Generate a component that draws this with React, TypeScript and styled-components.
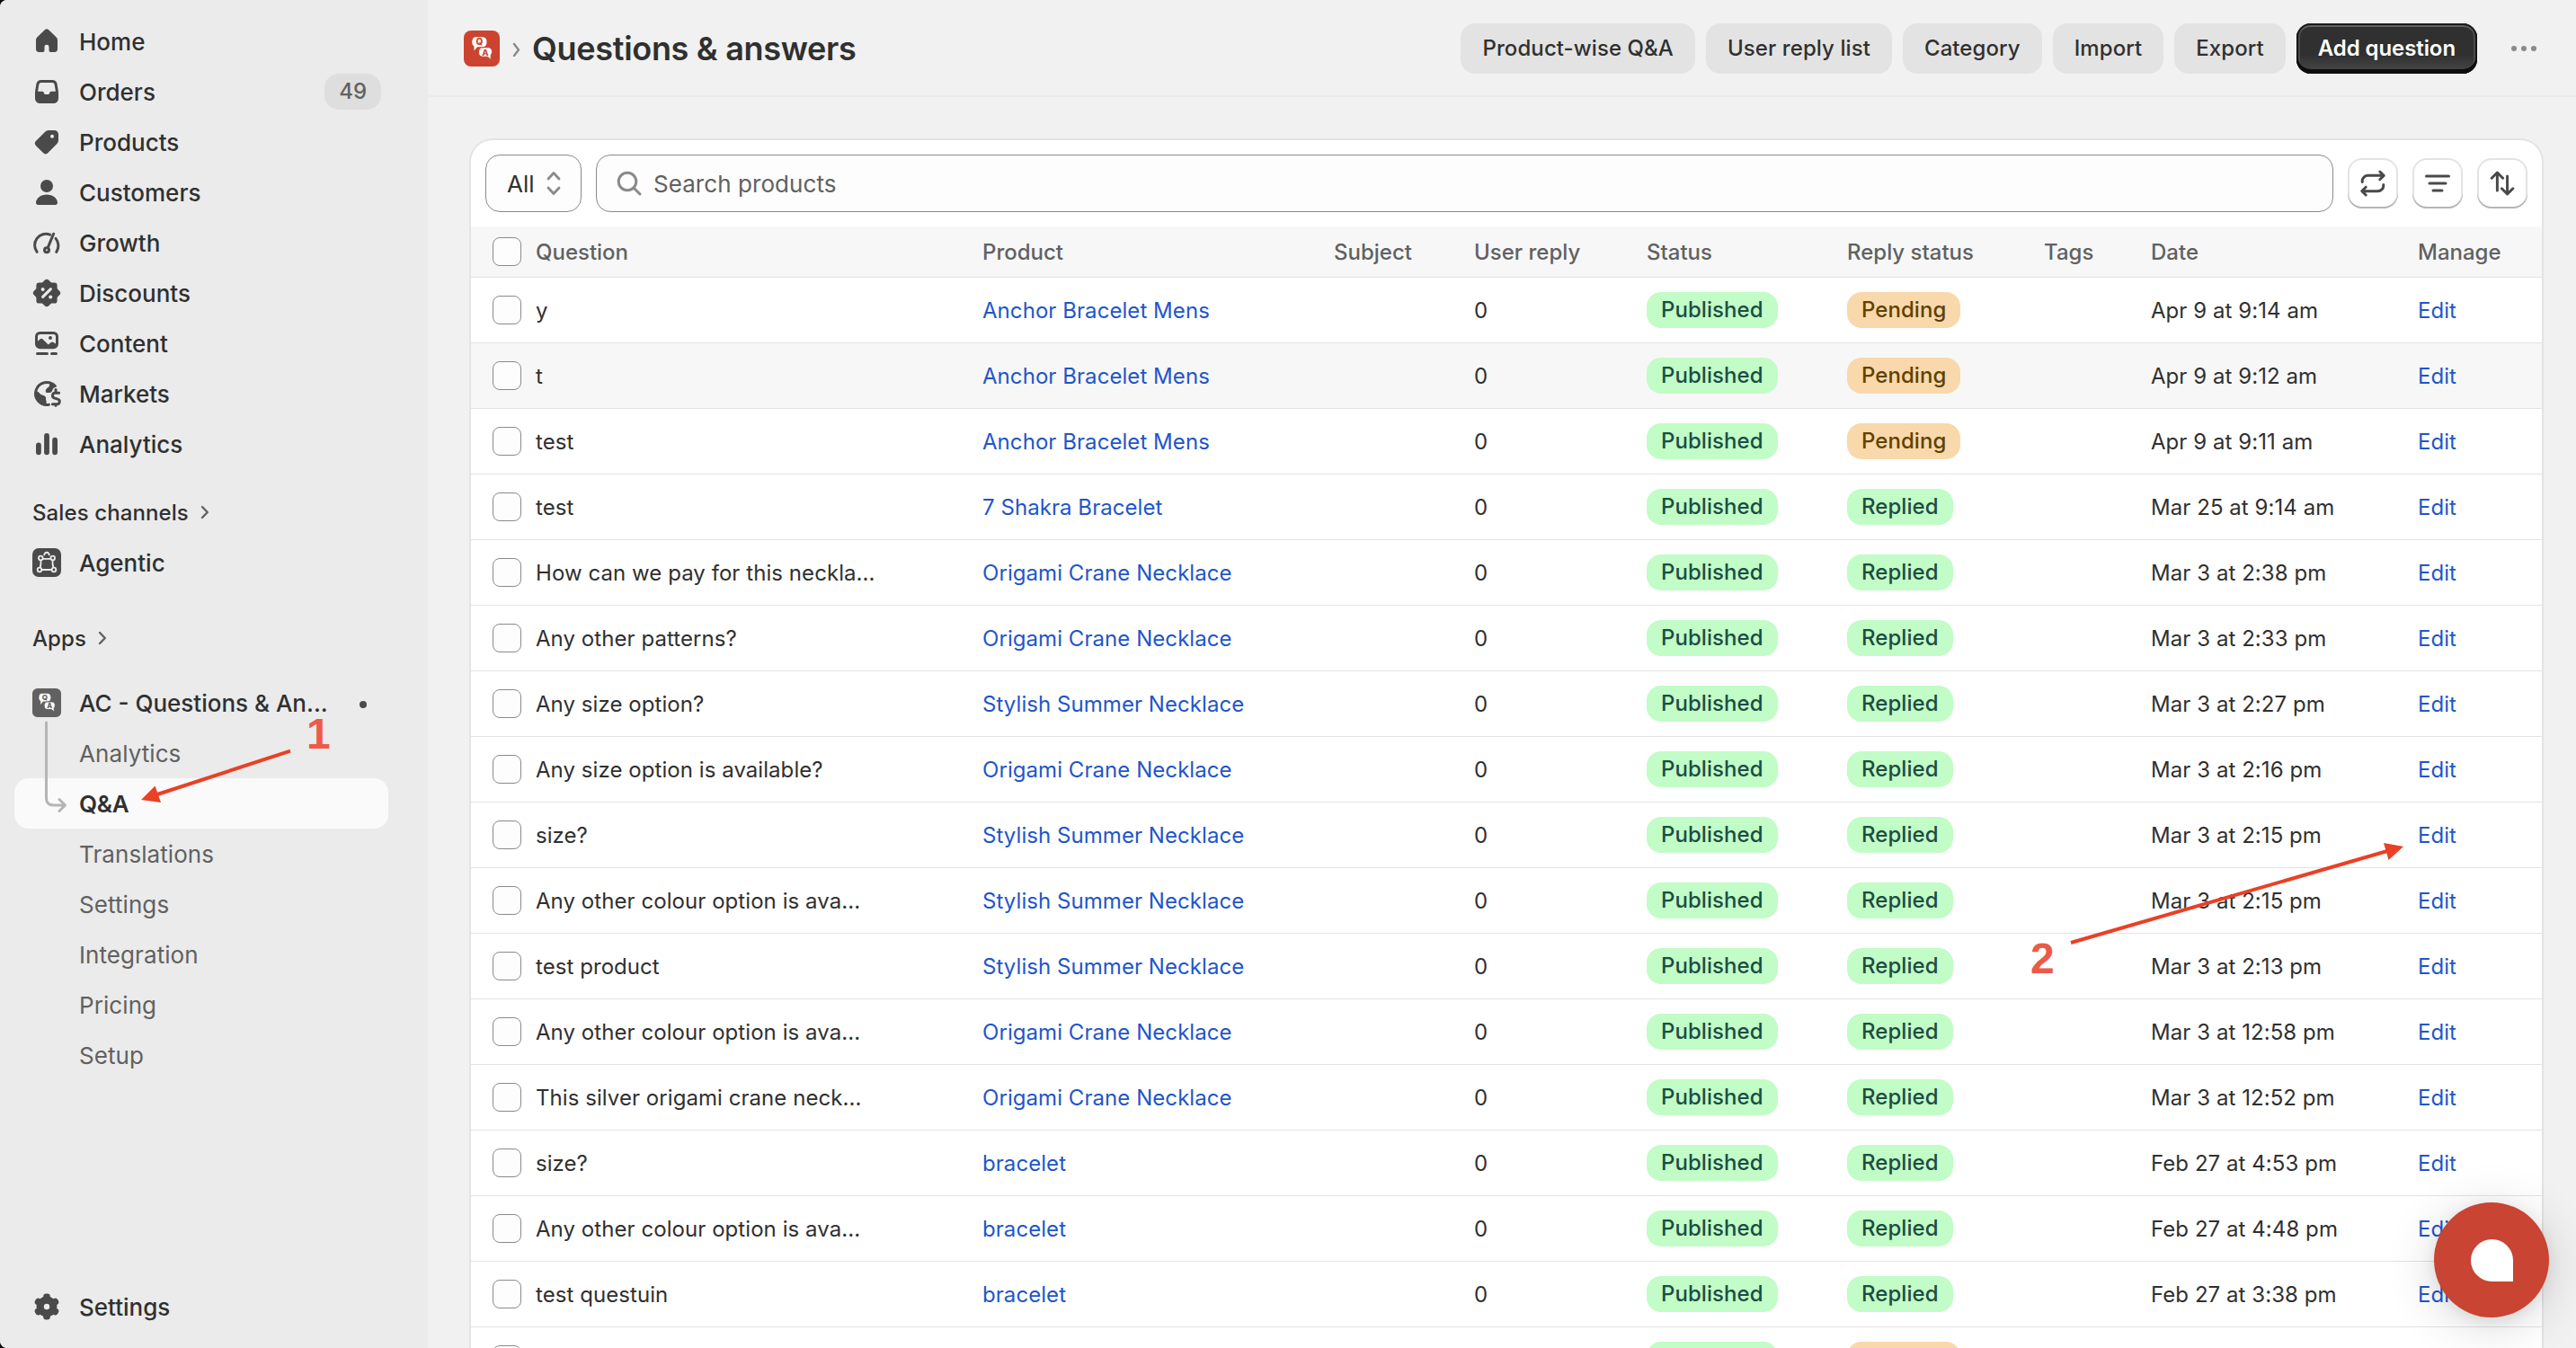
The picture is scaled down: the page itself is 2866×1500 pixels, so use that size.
import React from "react";
import styled, { createGlobalStyle, css } from "styled-components";

const GlobalStyle = createGlobalStyle`
  *, *::before, *::after { box-sizing: border-box; }
  html, body { margin: 0; padding: 0; background: #0c0c0c; overflow: hidden; }
  body {
    font-family: Inter, "Liberation Sans", sans-serif;
    color: #303030;
    -webkit-font-smoothing: antialiased;
  }
`;

const Shell = styled.div`
  position: relative;
  display: flex;
  width: 2866px;
  height: 1500px;
  overflow: hidden;
  background: #f1f1f1;
  border-radius: 8px 0 0 8px;
`;

/* ---------- sidebar ---------- */

const Sidebar = styled.nav`
  display: flex;
  flex-direction: column;
  flex: none;
  width: 476px;
  padding: 18px 44px 18px 16px;
  background: #ebebeb;
`;

const NavRow = styled.div<{ $kind?: "main" | "sub" | "active" }>`
  display: flex;
  align-items: center;
  height: 56px;
  padding: 0 8px 0 16px;
  border-radius: 16px;
  font-size: 26px;
  font-weight: 500;
  color: #303030;
  ${(p) =>
    p.$kind === "sub" &&
    css`
      font-weight: 400;
      letter-spacing: 0.08px;
      color: #616161;
    `}
  ${(p) =>
    p.$kind === "active" &&
    css`
      font-weight: 600;
      letter-spacing: -0.3px;
      background: #fafafa;
    `}
`;

const NavIcon = styled.span`
  display: flex;
  align-items: center;
  justify-content: center;
  flex: none;
  width: 40px;
  height: 40px;
  margin-right: 16px;
  color: #4a4a4a;
  svg { display: block; }
`;

const NavLabel = styled.span`
  flex: 1;
  white-space: nowrap;
`;

const CountBadge = styled.span`
  padding: 0 16px;
  border-radius: 16px;
  background: #dedede;
  font-size: 24px;
  font-weight: 500;
  line-height: 40px;
  color: #616161;
`;

const Section = styled.div<{ $top: number; $bottom: number }>`
  display: flex;
  align-items: center;
  gap: 13px;
  height: 40px;
  margin-top: ${(p) => p.$top}px;
  margin-bottom: ${(p) => p.$bottom}px;
  padding-left: 20px;
  font-size: 24px;
  font-weight: 500;
  letter-spacing: 0.1px;
  color: #303030;
`;

const AppGroup = styled.div`
  position: relative;
`;

const Connector = styled.svg`
  position: absolute;
  left: 32px;
  top: 46px;
`;

const Dot = styled.span`
  width: 8px;
  height: 8px;
  margin: 4px 16px 0 0;
  border-radius: 50%;
  background: #4a4a4a;
`;

const Spacer = styled.div`
  flex: 1;
`;

/* ---------- main ---------- */

const Main = styled.main`
  display: flex;
  flex-direction: column;
  flex: 1;
  min-width: 0;
`;

const TopBar = styled.header`
  display: flex;
  align-items: center;
  flex: none;
  height: 108px;
  padding: 2px 38px 0 40px;
  border-bottom: 2px solid #ebebeb;
`;

const Title = styled.h1`
  flex: 1;
  margin: 0 0 0 12px;
  font-size: 36px;
  line-height: 48px;
  font-weight: 600;
  letter-spacing: -0.3px;
  white-space: nowrap;
`;

const Crumb = styled.svg`
  margin-left: 14px;
`;

const Actions = styled.div`
  display: flex;
  align-items: center;
  gap: 12px;
`;

const Button = styled.button<{ $primary?: boolean }>`
  height: 56px;
  padding: 0 24px;
  border: 0;
  border-radius: 16px;
  background: #e3e3e3;
  font: 500 24px/56px Inter, "Liberation Sans", sans-serif;
  letter-spacing: 0.08px;
  color: #303030;
  white-space: nowrap;
  ${(p) =>
    p.$primary &&
    css`
      color: #fff;
      font-weight: 600;
      letter-spacing: -0.08px;
      background: linear-gradient(180deg, #303030 63%, #4a4a4a 100%);
      box-shadow: inset 0 -4px 0 1px #0d0d0d, inset 0 0 0 2px #1a1a1a,
        inset 0 4px 0 #616161, inset 2px 0 0 2px #4a4a4a, inset -2px 0 0 2px #4a4a4a;
    `}
`;

const More = styled.svg`
  margin-left: 32px;
`;

const Card = styled.section`
  flex: none;
  width: 2304px;
  height: 1500px;
  margin: 48px 0 0 48px;
  border-radius: 24px;
  background: #fff;
  box-shadow: 0 0 0 2px #e3e3e3;
  overflow: hidden;
`;

const Filters = styled.div`
  display: flex;
  align-items: center;
  gap: 16px;
  height: 96px;
  padding: 0 16px;
`;

const Field = styled.div<{ $grow?: boolean }>`
  display: flex;
  align-items: center;
  height: 64px;
  border: 1.4px solid #8a8a8a;
  border-radius: 16px;
  background: #fdfdfd;
  font-size: 26px;
  font-weight: 400;
  letter-spacing: 0.06px;
  ${(p) =>
    p.$grow
      ? css`
          flex: 1;
          gap: 13px;
          padding-left: 22px;
          color: #616161;
        `
      : css`
          width: 107px;
          gap: 12px;
          padding-left: 23px;
        `}
`;

const IconButton = styled.button`
  display: flex;
  align-items: center;
  justify-content: center;
  width: 56px;
  height: 56px;
  padding: 0;
  border: 0;
  border-radius: 16px;
  background: #fff;
  color: #4a4a4a;
  box-shadow: inset 0 -2px 0 #b5b5b5, inset 0 0 0 2px #e3e3e3;
`;

const columns = "48px 497px 391px 156px 192px 223px 219px 119px 297px 1fr";

const HeadRow = styled.div`
  display: grid;
  grid-template-columns: ${columns};
  align-items: center;
  height: 56px;
  padding-left: 24px;
  background: #f7f7f7;
  font-size: 24px;
  font-weight: 500;
  color: #616161;
`;

const Row = styled.div<{ $hover?: boolean }>`
  display: grid;
  grid-template-columns: ${columns};
  align-items: center;
  height: 73px;
  padding-left: 24px;
  border-top: 1px solid #e3e3e3;
  background: ${(p) => (p.$hover ? "#f7f7f7" : "#fff")};
  font-size: 24px;
  font-weight: 400;
  letter-spacing: 0.06px;
  white-space: nowrap;
`;

const Checkbox = styled.span`
  width: 32px;
  height: 32px;
  border: 1.4px solid #8a8a8a;
  border-radius: 8px;
  background: #fdfdfd;
`;

const Link = styled.a`
  color: #1f56c9;
  text-decoration: none;
`;

const Badge = styled.span<{ $tone: "success" | "warning" }>`
  justify-self: start;
  padding: 0 16px;
  border-radius: 16px;
  line-height: 40px;
  font-weight: 500;
  background: ${(p) => (p.$tone === "success" ? "#c2fcc6" : "#f9d8ab")};
  color: ${(p) => (p.$tone === "success" ? "#1c4d42" : "#5e4200")};
`;

/* ---------- overlays ---------- */

const Chat = styled.button`
  position: absolute;
  left: 2708px;
  top: 1338px;
  display: flex;
  align-items: center;
  justify-content: center;
  width: 128px;
  height: 128px;
  padding: 0;
  border: 0;
  border-radius: 50%;
  background: #c94432;
  box-shadow: 0 8px 56px rgba(0, 0, 0, 0.16), 0 4px 16px rgba(0, 0, 0, 0.08);
`;

const Drop = styled.span`
  width: 47px;
  height: 47px;
  border-radius: 50% 50% 0 50%;
  background: #fff;
`;

const Arrows = styled.svg`
  position: absolute;
  left: 0;
  top: 0;
  pointer-events: none;
`;

const Callout = styled.span<{ $x: number; $y: number }>`
  position: absolute;
  left: ${(p) => p.$x}px;
  top: ${(p) => p.$y}px;
  font: 700 48px/48px "Liberation Sans", Arial, sans-serif;
  color: #ed5a4a;
`;

/* ---------- icons ---------- */

const Svg = ({ children, size = 40 }: { children: React.ReactNode; size?: number }) => (
  <svg width={size} height={size} viewBox="0 0 20 20" fill="currentColor" fillRule="evenodd">
    {children}
  </svg>
);

const line = {
  fill: "none",
  stroke: "currentColor",
  strokeWidth: 1.5,
  strokeLinecap: "round" as const,
  strokeLinejoin: "round" as const,
};

const HomeIcon = () => (
  <Svg>
    <path d="M8.9 3.65a1.6 1.6 0 0 1 2.2 0l4 3.85c.58.55.9 1.2.9 1.95v4.85a1.7 1.7 0 0 1-1.7 1.7h-2a1 1 0 0 1-1.05-1v-1.85a1.25 1.25 0 0 0-2.5 0v1.85a1 1 0 0 1-1.05 1h-2a1.7 1.7 0 0 1-1.7-1.7v-4.85c0-.75.32-1.4.9-1.95z" />
  </Svg>
);
const OrdersIcon = () => (
  <Svg>
    <path d="M6.9 3.5h6.2a2.75 2.75 0 0 1 2.7 2.3l.6 3.6c.07.5.1.9.1 1.3v3.05a2.75 2.75 0 0 1-2.75 2.75h-7.5a2.75 2.75 0 0 1-2.75-2.75v-3.05c0-.4.03-.8.1-1.3l.6-3.6a2.75 2.75 0 0 1 2.7-2.3zM6.9 5a1.25 1.25 0 0 0-1.23 1.05l-.62 3.8h2.4c.4 0 .7.2.85.5l.25.6c.1.3.3.5.6.5h1.7c.3 0 .5-.2.6-.5l.25-.6c.15-.3.45-.5.85-.5h2.4l-.62-3.8a1.25 1.25 0 0 0-1.23-1.05z" />
  </Svg>
);
const ProductsIcon = () => (
  <Svg>
    <path d="M10.9 3.5h3.35a2.25 2.25 0 0 1 2.25 2.25v3.35a2.75 2.75 0 0 1-.8 1.95l-5 5a1.9 1.9 0 0 1-2.7 0l-3.95-3.95a1.9 1.9 0 0 1 0-2.7l5-5a2.75 2.75 0 0 1 1.85-.9zM13 5.9a1 1 0 1 0 0 2 1 1 0 0 0 0-2z" />
  </Svg>
);
const CustomersIcon = () => (
  <Svg>
    <circle cx="10" cy="6.5" r="3.5" />
    <path d="M4 15.8c0-2.5 2.7-4.6 6-4.6s6 2.1 6 4.6c0 .7-.5 1.2-1.2 1.2H5.2c-.7 0-1.2-.5-1.2-1.2z" />
  </Svg>
);
const GrowthIcon = () => (
  <Svg>
    <path {...line} d="M4.6 15.2a6.25 6.25 0 0 1 7.2-9.65" />
    <path {...line} d="M15 7.7a6.25 6.25 0 0 1 .4 7.5" />
    <path {...line} d="M10.6 12.8 13.8 5.1" />
    <circle {...line} cx="10" cy="14.1" r="1.25" />
  </Svg>
);
const DiscountsIcon = () => (
  <Svg>
    <rect x="4.2" y="4.2" width="11.6" height="11.6" rx="1.6" />
    <rect x="4.2" y="4.2" width="11.6" height="11.6" rx="1.6" transform="rotate(45 10 10)" />
    <path {...line} stroke="#ebebeb" d="m7.8 12.2 4.4-4.4" />
    <circle cx="7.8" cy="8" r="1" fill="#ebebeb" />
    <circle cx="12.1" cy="12.2" r="1" fill="#ebebeb" />
  </Svg>
);
const ContentIcon = () => (
  <Svg>
    <path d="M6.25 3.5h7.5a2.75 2.75 0 0 1 2.75 2.75v4.1a2.75 2.75 0 0 1-2.75 2.75h-7.5a2.75 2.75 0 0 1-2.75-2.75v-4.1a2.75 2.75 0 0 1 2.75-2.75zM6.25 5A1.25 1.25 0 0 0 5 6.25v2.6l1.2-1.05a1.3 1.3 0 0 1 1.75.05l2.9 2.95 1.5-1.3a1.2 1.2 0 0 1 1.45-.05l1.2.8v-4a1.25 1.25 0 0 0-1.25-1.25zM12 6a1 1 0 1 1 0 2 1 1 0 0 1 0-2z" />
    <path {...line} d="M4.75 15.7h5.5M12.75 15.7h2.5" />
  </Svg>
);
const MarketsIcon = () => (
  <Svg>
    <path {...line} d="M11.2 16.15A6.25 6.25 0 1 1 14.6 5.75" />
    <path d="M3.4 8.6c1.2-.1 2.2.5 2.7 1.3.5.8 1.5.9 2.3 1.2.9.3 1.3 1 1.1 1.8-.1.6.3.9.3 1.5v2.3l-2.8-.5-2.5-2.4-1.2-2.9z" />
    <path d="M13.9 4.2 15 5.2c.6.6.5 1-.1 1.2-.9.3-1.5.8-1.7 1.6-.3.9-.8 1.5-1.8 1.5h-1c-.8 0-1.2-.6-1-1.3.3-.9.7-1.3 1.2-1.6.7-.4.9-.8.9-1.4 0-.6.4-1 1-1z" />
    <path {...line} d="M16.8 9.6h-2.2a1.45 1.45 0 0 0-.45 2.8l1.9.65a1.45 1.45 0 0 1-.45 2.85h-2.4M15 7.8v1.6M15 16.1v.5" />
  </Svg>
);
const AnalyticsIcon = () => (
  <Svg>
    <rect x="4" y="9.3" width="2.9" height="6.8" rx="1.45" />
    <rect x="8.55" y="4" width="2.9" height="12.1" rx="1.45" />
    <rect x="13.1" y="6.4" width="2.9" height="9.7" rx="1.45" />
  </Svg>
);
const SettingsIcon = () => (
  <Svg>
    <circle {...line} strokeWidth={4.1} cx="10" cy="10" r="3.65" />
    {[0, 60, 120].map((a) => (
      <g key={a} transform={`rotate(${a} 10 10)`}>
        <rect x="8.1" y="2.75" width="3.8" height="5" rx="1.6" />
        <rect x="8.1" y="12.25" width="3.8" height="5" rx="1.6" />
      </g>
    ))}
  </Svg>
);
const AgenticIcon = () => (
  <svg width="32" height="32" viewBox="0 0 32 32">
    <rect width="32" height="32" rx="7" fill="#4a4a4a" />
    <g fill="none" stroke="#ebebeb" strokeWidth="1.8">
      <circle cx="9.3" cy="11" r="2.3" />
      <circle cx="22.7" cy="11" r="2.3" />
      <circle cx="8" cy="24" r="2.3" />
      <circle cx="24" cy="24" r="2.3" />
      <path d="M11.6 11.8h8.8M10.3 24h11.4M9.4 13.4c.4 3.2 0 5.800-.8 8.300M22.600 13.400c-.4 3.200 0 5.800.8 8.300M13.400 8.200a2.700 2.700 0 1 1 5.200 0" />
    </g>
  </svg>
);
const QaLogo = ({ size, bg, radius }: { size: number; bg: string; radius: number }) => (
  <svg width={size} height={size} viewBox="0 0 40 40">
    <rect width="40" height="40" rx={radius} fill={bg} />
    <g fill="#fff">
      <path d="M13 7.200h7.500c3.600 0 5 2.200 5 5.500s-1.400 5.500-5 5.500H15L11.500 22.500v-5c-1.500-1-2.300-2.500-2.300-4.500 0-3.600 1.200-5.800 3.800-5.800z" />
      <path d="M21 18.800h6c3 0 4.500 1.600 4.500 4.700 0 1.600-.4 2.800-1.300 3.600V32.500l-3.700-3.300H21c-3 0-4.500-2-4.500-5.200s1.500-5.200 4.500-5.200z" stroke={bg} strokeWidth="1" />
    </g>
    <g fill={bg} fontFamily="Inter, sans-serif" fontWeight="800" textAnchor="middle">
      <text x="17.3" y="16.300" fontSize="10">Q</text>
      <text x="24" y="27.800" fontSize="9.500">A</text>
    </g>
  </svg>
);
const Chevron = () => (
  <svg width="10" height="16" viewBox="0 0 10 16" fill="none" stroke="#616161" strokeWidth="2.4" strokeLinecap="round" strokeLinejoin="round">
    <path d="m2 2 5.8 6L2 14" />
  </svg>
);

/* ---------- data ---------- */

const nav: [string, React.FC, string?][] = [
  ["Home", HomeIcon],
  ["Orders", OrdersIcon, "49"],
  ["Products", ProductsIcon],
  ["Customers", CustomersIcon],
  ["Growth", GrowthIcon],
  ["Discounts", DiscountsIcon],
  ["Content", ContentIcon],
  ["Markets", MarketsIcon],
  ["Analytics", AnalyticsIcon],
];

const subNav = ["Analytics", "Q&A", "Translations", "Settings", "Integration", "Pricing", "Setup"];

const heads = ["Question", "Product", "Subject", "User reply", "Status", "Reply status", "Tags", "Date", "Manage"];

const anchor = "Anchor Bracelet Mens";
const crane = "Origami Crane Necklace";
const summer = "Stylish Summer Necklace";

const rows: [string, string, string, string][] = [
  ["y", anchor, "Pending", "Apr 9 at 9:14 am"],
  ["t", anchor, "Pending", "Apr 9 at 9:12 am"],
  ["test", anchor, "Pending", "Apr 9 at 9:11 am"],
  ["test", "7 Shakra Bracelet", "Replied", "Mar 25 at 9:14 am"],
  ["How can we pay for this neckla...", crane, "Replied", "Mar 3 at 2:38 pm"],
  ["Any other patterns?", crane, "Replied", "Mar 3 at 2:33 pm"],
  ["Any size option?", summer, "Replied", "Mar 3 at 2:27 pm"],
  ["Any size option is available?", crane, "Replied", "Mar 3 at 2:16 pm"],
  ["size?", summer, "Replied", "Mar 3 at 2:15 pm"],
  ["Any other colour option is ava...", summer, "Replied", "Mar 3 at 2:15 pm"],
  ["test product", summer, "Replied", "Mar 3 at 2:13 pm"],
  ["Any other colour option is ava...", crane, "Replied", "Mar 3 at 12:58 pm"],
  ["This silver origami crane neck...", crane, "Replied", "Mar 3 at 12:52 pm"],
  ["size?", "bracelet", "Replied", "Feb 27 at 4:53 pm"],
  ["Any other colour option is ava...", "bracelet", "Replied", "Feb 27 at 4:48 pm"],
  ["test questuin", "bracelet", "Replied", "Feb 27 at 3:38 pm"],
  ["", "", "Pending", ""],
];

export default function App() {
  return (
    <>
      <GlobalStyle />
      <Shell>
        <Sidebar>
          {nav.map(([label, Icon, count]) => (
            <NavRow key={label}>
              <NavIcon><Icon /></NavIcon>
              <NavLabel>{label}</NavLabel>
              {count && <CountBadge>{count}</CountBadge>}
            </NavRow>
          ))}
          <Section $top={28} $bottom={8}>Sales channels <Chevron /></Section>
          <NavRow>
            <NavIcon><AgenticIcon /></NavIcon>
            <NavLabel>Agentic</NavLabel>
          </NavRow>
          <Section $top={36} $bottom={24}>Apps <Chevron /></Section>
          <AppGroup>
            <NavRow>
              <NavIcon><QaLogo size={32} bg="#616161" radius={7} /></NavIcon>
              <NavLabel>AC - Questions &amp; An...</NavLabel>
              <Dot />
            </NavRow>
            {subNav.map((label) => (
              <NavRow key={label} $kind={label === "Q&A" ? "active" : "sub"}>
                <NavIcon />
                <NavLabel>{label}</NavLabel>
              </NavRow>
            ))}
            <Connector width="30" height="106" viewBox="0 0 30 106" fill="none" stroke="#b5b5b5" strokeWidth="3" strokeLinecap="round" strokeLinejoin="round">
              <path d="M3.5 4V88q0 8 8 8H24M18 89.5l6.500 6.500-6.500 6.500" />
            </Connector>
          </AppGroup>
          <Spacer />
          <NavRow>
            <NavIcon><SettingsIcon /></NavIcon>
            <NavLabel>Settings</NavLabel>
          </NavRow>
        </Sidebar>

        <Main>
          <TopBar>
            <QaLogo size={40} bg="#cc4330" radius={8} />
            <Crumb width="10" height="18" viewBox="0 0 10 18" fill="none" stroke="#8a8a8a" strokeWidth="2.4" strokeLinecap="round" strokeLinejoin="round">
              <path d="m2 4 5 6.500L2 17" />
            </Crumb>
            <Title>Questions &amp; answers</Title>
            <Actions>
              <Button>Product-wise Q&amp;A</Button>
              <Button>User reply list</Button>
              <Button>Category</Button>
              <Button>Import</Button>
              <Button>Export</Button>
              <Button $primary>Add question</Button>
            </Actions>
            <More width="40" height="40" viewBox="0 0 40 40" fill="#8a8a8a">
              <circle cx="9" cy="20" r="3" />
              <circle cx="20" cy="20" r="3" />
              <circle cx="31" cy="20" r="3" />
            </More>
          </TopBar>

          <Card>
            <Filters>
              <Field>
                All
                <svg width="18" height="28" viewBox="0 0 18 28" fill="none" stroke="#8a8a8a" strokeWidth="2.8" strokeLinecap="round" strokeLinejoin="round">
                  <path d="m3 9 6-6.500L15 9M3 19l6 6.500 6-6.500" />
                </svg>
              </Field>
              <Field $grow>
                <svg width="28" height="28" viewBox="0 0 28 28" fill="none" stroke="#8a8a8a" strokeWidth="3" strokeLinecap="round">
                  <circle cx="12" cy="12" r="9.8" />
                  <path d="m19 19 7 7" />
                </svg>
                Search products
              </Field>
              <IconButton>
                <Svg>
                  <path {...line} d="M4.1 9.3v-.5a3.200 3.200 0 0 1 3.200-3.200h8.600M13.900 3.500l2.200 2.200-2.200 2.200M15.900 10.700v.5a3.200 3.200 0 0 1-3.200 3.200H4.100M6.100 16.500l-2.200-2.200 2.200-2.200" />
                </Svg>
              </IconButton>
              <IconButton>
                <Svg><path {...line} d="M3.75 6h12.500M5.500 10h9M7.500 14h5" /></Svg>
              </IconButton>
              <IconButton>
                <Svg>
                  <path {...line} d="M7.2 14V4.300M4.100 7.100l3.100-3.100 3.100 3.100M12.800 6v9.700M9.700 12.900l3.100 3.100 3.100-3.100" />
                </Svg>
              </IconButton>
            </Filters>
            <HeadRow>
              <Checkbox />
              {heads.map((h) => (
                <span key={h}>{h}</span>
              ))}
            </HeadRow>
            {rows.map(([question, product, reply, date], i) => (
              <Row key={i} $hover={i === 1}>
                <Checkbox />
                <span>{question}</span>
                <Link>{product}</Link>
                <span />
                <span>{date && "0"}</span>
                <Badge $tone="success">Published</Badge>
                <Badge $tone={reply === "Pending" ? "warning" : "success"}>{reply}</Badge>
                <span />
                <span>{date}</span>
                <Link>{date && "Edit"}</Link>
              </Row>
            ))}
          </Card>
        </Main>

        <Arrows width="2866" height="1500" viewBox="0 0 2866 1500" fill="#ea4025" stroke="#ea4025">
          <path d="M323 835.7 175 884M2304 1049l352-102" fill="none" strokeWidth="4" />
          <path d="M157 890l15.500-15.500 6.500 18.500zM2674 942l-22-4 5.500 19z" stroke="none" />
        </Arrows>
        <Callout $x={341} $y={793}>1</Callout>
        <Callout $x={2259} $y={1043}>2</Callout>
        <Chat><Drop /></Chat>
      </Shell>
    </>
  );
}
